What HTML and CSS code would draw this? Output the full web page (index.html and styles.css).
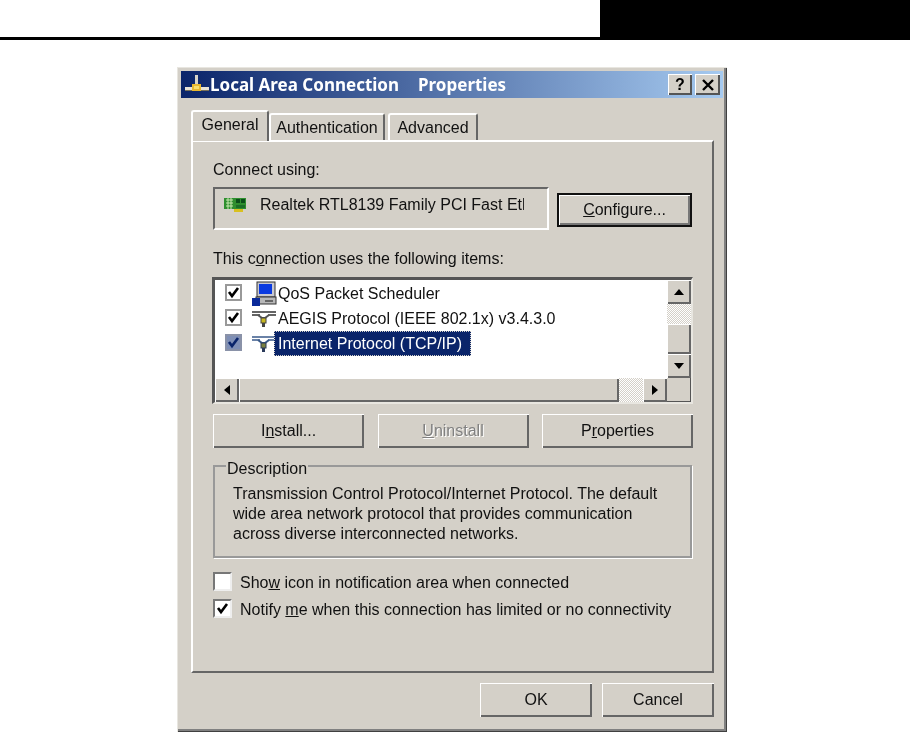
FILE: index.html
```html
<html>
    <head>
        <title>Local Area Connection Properties</title>
        <link rel="stylesheet" href="styles.css">
    </head>
    <body>
        <div class="top">
            <div class="topblock"></div>
        </div>
        <div class="dialog">
            <div class="titlebar">
                <svg class="titleicon" width="26" height="24" viewBox="0 0 26 24">
                    <rect x="11" y="3" width="3" height="11" fill="#d8d4c8"/>
                    <rect x="1" y="15" width="24" height="3" fill="#e8e4d8"/>
                    <rect x="1" y="18" width="24" height="1" fill="#77705a"/>
                    <rect x="8" y="12" width="9" height="7" fill="#e8b830"/>
                    <rect x="10" y="14" width="5" height="3" fill="#f8e070"/>
                </svg>
                <span class="titletext">Local Area Connection</span>
                <span class="titletext">Properties</span>
                <div class="titlebtns">
                    <div class="capbtn">?</div>
                    <div class="capbtn closebtn">
                        <svg width="14" height="12" viewBox="0 0 14 12"><path d="M2 1 L12 11 M12 1 L2 11" stroke="#000" stroke-width="2.4"/></svg>
                    </div>
                </div>
            </div>

            <div class="tabs">
                <div class="tab active">General</div>
                <div class="tab t2">Authentication</div>
                <div class="tab t3">Advanced</div>
            </div>

            <div class="panel">
                <p class="label">Connect using:</p>
                <div class="adapterrow">
                    <div class="adapter">
                        <svg width="25" height="19" viewBox="0 0 25 19">
                            <rect x="1" y="3" width="22" height="11" fill="#2f8f2f"/>
                            <path d="M3 5 H10 M3 8 H10 M3 11 H10 M5 3 V14 M8 3 V14" stroke="#c8e8b0" stroke-width="1"/>
                            <rect x="13" y="4" width="4" height="4" fill="#0b4f1a"/>
                            <rect x="18" y="4" width="4" height="4" fill="#0b4f1a"/>
                            <rect x="13" y="10" width="9" height="3" fill="#1c6e28"/>
                            <rect x="11" y="14" width="9" height="3" fill="#d8c020"/>
                        </svg>
                        <span class="adaptername">Realtek RTL8139 Family PCI Fast Eth</span>
                    </div>
                    <div class="btn configure"><span><u>C</u>onfigure...</span></div>
                </div>

                <p class="label items">This c<u>o</u>nnection uses the following items:</p>
                <div class="listbox">
                    <div class="listmain">
                        <div class="rows">
                            <div class="row">
                                <span class="check"><svg width="13" height="13" viewBox="0 0 13 13"><path d="M2 6 L5 10 L11 2" fill="none" stroke="#000" stroke-width="2.6"/></svg></span>
                                <svg class="rowicon" width="26" height="26" viewBox="0 0 26 26">
                                    <rect x="6" y="1" width="18" height="15" fill="#c8c8d0" stroke="#333"/>
                                    <rect x="8" y="3" width="13" height="10" fill="#0a3ae0"/>
                                    <rect x="5" y="16" width="20" height="7" fill="#b8b8b8" stroke="#333"/>
                                    <rect x="1" y="17" width="8" height="8" fill="#0a2a9a"/>
                                    <rect x="14" y="19" width="8" height="2" fill="#666"/>
                                </svg>
                                <span class="rowtext">QoS Packet Scheduler</span>
                            </div>
                            <div class="row">
                                <span class="check"><svg width="13" height="13" viewBox="0 0 13 13"><path d="M2 6 L5 10 L11 2" fill="none" stroke="#000" stroke-width="2.6"/></svg></span>
                                <svg class="rowicon" width="26" height="26" viewBox="0 0 26 26">
                                    <path d="M1 6 H25 M1 9 H9 M17 9 H25" stroke="#333" stroke-width="1.6"/>
                                    <path d="M7 9 L11 12 H14 L18 9" fill="none" stroke="#555" stroke-width="2"/>
                                    <rect x="10" y="12" width="5" height="5" fill="#c8b820" stroke="#444"/>
                                    <rect x="11" y="17" width="3" height="4" fill="#444"/>
                                </svg>
                                <span class="rowtext">AEGIS Protocol (IEEE 802.1x) v3.4.3.0</span>
                            </div>
                            <div class="row selected">
                                <span class="check"><svg width="13" height="13" viewBox="0 0 13 13"><path d="M2 6 L5 10 L11 2" fill="none" stroke="#0a246a" stroke-width="2.6"/></svg></span>
                                <svg class="rowicon" width="26" height="26" viewBox="0 0 26 26">
                                    <path d="M1 6 H25 M1 9 H9 M17 9 H25" stroke="#3a5a8a" stroke-width="1.6"/>
                                    <path d="M7 9 L11 12 H14 L18 9" fill="none" stroke="#3a5a8a" stroke-width="2"/>
                                    <rect x="10" y="12" width="5" height="5" fill="#7a8040" stroke="#2a3a5a"/>
                                    <rect x="11" y="17" width="3" height="4" fill="#2a3a5a"/>
                                </svg>
                                <span class="rowtext">Internet Protocol (TCP/IP)</span>
                            </div>
                        </div>
                        <div class="hscroll">
                            <div class="sbtn"><i class="arrow left"></i></div>
                            <div class="hthumb"></div>
                            <div class="track"></div>
                            <div class="sbtn"><i class="arrow right"></i></div>
                        </div>
                    </div>
                    <div class="vscroll">
                        <div class="sbtn"><i class="arrow up"></i></div>
                        <div class="track"></div>
                        <div class="vthumb"></div>
                        <div class="sbtn"><i class="arrow down"></i></div>
                    </div>
                </div>

                <div class="actions">
                    <div class="btn"><span>I<u>n</u>stall...</span></div>
                    <div class="btn disabled"><span><u>U</u>ninstall</span></div>
                    <div class="btn"><span>P<u>r</u>operties</span></div>
                </div>

                <div class="group">
                    <span class="legend">Description</span>
                    <p>Transmission Control Protocol/Internet Protocol. The default wide area network protocol that provides communication across diverse interconnected networks.</p>
                </div>

                <div class="option first">
                    <span class="check big"></span>
                    <span class="optiontext">Sho<u>w</u> icon in notification area when connected</span>
                </div>
                <div class="option">
                    <span class="check big"><svg width="13" height="13" viewBox="0 0 13 13"><path d="M2 6 L5 10 L11 2" fill="none" stroke="#000" stroke-width="2.6"/></svg></span>
                    <span class="optiontext">Notify <u>m</u>e when this connection has limited or no connectivity</span>
                </div>
            </div>

            <div class="footer">
                <div class="btn"><span>OK</span></div>
                <div class="btn"><span>Cancel</span></div>
            </div>
        </div>
    </body>
</html>
```

FILE: styles.css
```css
*{
    margin: 0;
    padding: 0;
    box-sizing: border-box;
}
body{
    background: #fff;
    font-family: "Liberation Sans", Arial, sans-serif;
    font-size: 16px;
    color: #111;
    overflow: hidden;
    height: 733px;
}
.top{
    height: 40px;
    border-bottom: 3px solid #000;
    display: flex;
    justify-content: flex-end;
}
.topblock{
    width: 310px;
    height: 37px;
    background: #000;
}
.dialog{
    width: 550px;
    height: 665px;
    margin-top: 27px;
    margin-left: 177px;
    padding: 4px;
    background: #d4d0c8;
    box-shadow: inset 1px 1px #e8e6e0, inset -1px -1px #404040, inset -3px -3px #808080;
    filter: blur(0.35px);
}
.titlebar{
    height: 27px;
    display: flex;
    align-items: center;
    gap: 19px;
    padding-left: 29px;
    position: relative;
    background: linear-gradient(to right, #0a246a, #a6caf0);
}
.titleicon{
    position: absolute;
    left: 3px;
    top: 1px;
}
.titletext{
    color: #fff;
    font-family: "Noto Sans", sans-serif;
    font-weight: bold;
    font-size: 17px;
}
.titlebtns{
    margin-left: auto;
    margin-right: 3px;
    display: flex;
    gap: 3px;
}
.capbtn{
    width: 24px;
    height: 21px;
    background: #d4d0c8;
    box-shadow: inset 1px 1px #fff, inset -2px -2px #555;
    display: flex;
    align-items: center;
    justify-content: center;
    font-weight: bold;
    font-size: 16px;
    color: #000;
}
.closebtn{
    width: 25px;
}
.tabs{
    display: flex;
    align-items: flex-end;
    height: 30px;
    margin-top: 12px;
    margin-left: 10px;
    position: relative;
}
.tab{
    height: 27px;
    padding-top: 4px;
    text-align: center;
    background: #d4d0c8;
    border-top: 2px solid #fff;
    border-left: 2px solid #fff;
    border-right: 2px solid #666;
    border-radius: 3px 3px 0 0;
    width: 116px;
}
.tab.active{
    width: 78px;
    height: 31px;
    margin-bottom: -1px;
    position: relative;
    z-index: 1;
}
.tab.t3{
    width: 90px;
    margin-left: 3px;
}
.panel{
    width: 523px;
    height: 533px;
    margin-left: 10px;
    padding: 18px 20px 0;
    border-top: 2px solid #fff;
    border-left: 2px solid #fff;
    border-right: 2px solid #666;
    border-bottom: 2px solid #666;
}
.label{
    height: 20px;
    line-height: 20px;
}
.adapterrow{
    display: flex;
    margin-top: 7px;
    gap: 8px;
}
.adapter{
    width: 336px;
    height: 43px;
    flex: none;
    display: flex;
    align-items: flex-start;
    padding: 6px 0 0 8px;
    gap: 12px;
    border-top: 2px solid #666;
    border-left: 2px solid #666;
    border-right: 2px solid #fff;
    border-bottom: 2px solid #fff;
}
.adaptername{
    width: 264px;
    line-height: 20px;
    white-space: nowrap;
    overflow: hidden;
}
.btn{
    height: 34px;
    width: 151px;
    flex: none;
    display: flex;
    align-items: center;
    justify-content: center;
    background: #d4d0c8;
    box-shadow: inset 1px 1px #fff, inset -2px -2px #666;
}
.configure{
    width: 135px;
    margin-top: 6px;
    border: 2px solid #111;
    box-shadow: inset 1px 1px #fff, inset -2px -2px #777;
}
.items{
    margin-top: 19px;
}
.listbox{
    display: flex;
    width: 481px;
    height: 127px;
    margin-top: 8px;
    margin-left: -1px;
    border-top: 3px solid #555;
    border-left: 3px solid #555;
    border-right: 2px solid #e8e6e0;
    border-bottom: 2px solid #e8e6e0;
    box-shadow: inset -1px -1px #555;
    background: #d4d0c8;
}
.listmain{
    flex: 1;
    display: flex;
    flex-direction: column;
}
.rows{
    height: 98px;
    background: #fff;
    padding: 1px 0 0 10px;
}
.row{
    display: flex;
    align-items: center;
    height: 25px;
}
.check{
    width: 17px;
    height: 17px;
    margin-bottom: 2px;
    background: #fff;
    border: 2px solid #999;
    display: flex;
    align-items: center;
    justify-content: center;
    flex: none;
}
.rowicon{
    margin-left: 9px;
    flex: none;
}
.rowtext{
    white-space: nowrap;
    padding: 0 1px;
}
.row.selected .check{
    background: #7f8fb5;
    border-color: #8a92a8;
}
.row.selected .rowtext{
    background: #0a246a;
    color: #fff;
    height: 25px;
    line-height: 25px;
    width: 197px;
    margin-left: -3px;
    padding: 0 4px;
    outline: 1px dotted #d4d0c8;
    outline-offset: -1px;
}
.hscroll{
    height: 24px;
    display: flex;
}
.vscroll{
    width: 24px;
    height: 98px;
    display: flex;
    flex-direction: column;
}
.sbtn{
    width: 24px;
    height: 24px;
    flex: none;
    display: flex;
    align-items: center;
    justify-content: center;
    background: #d4d0c8;
    box-shadow: inset 1px 1px #fff, inset -2px -2px #666;
}
.hthumb{
    width: 380px;
    background: #d4d0c8;
    box-shadow: inset 1px 1px #fff, inset -2px -2px #666;
}
.vthumb{
    height: 30px;
    background: #d4d0c8;
    box-shadow: inset 1px 1px #fff, inset -2px -2px #666;
}
.track{
    flex: 1;
    background: repeating-conic-gradient(#fff 0 25%, #d4d0c8 0 50%) 0 0 / 2px 2px;
}
.arrow{
    width: 0;
    height: 0;
    display: block;
    border: 5px solid transparent;
}
.arrow.left{
    border-right: 6px solid #000;
    border-left: 0;
}
.arrow.right{
    border-left: 6px solid #000;
    border-right: 0;
}
.arrow.up{
    border-bottom: 6px solid #000;
    border-top: 0;
}
.arrow.down{
    border-top: 6px solid #000;
    border-bottom: 0;
}
.actions{
    display: flex;
    justify-content: space-between;
    width: 480px;
    margin-top: 10px;
}
.disabled{
    color: #808080;
    text-shadow: 1px 1px #fff;
}
.group{
    position: relative;
    width: 479px;
    height: 93px;
    margin-top: 17px;
    padding: 17px 18px 0;
    border: 2px solid #999;
    box-shadow: 1px 1px #fff;
    line-height: 20px;
}
.legend{
    position: absolute;
    top: -7px;
    left: 11px;
    padding: 0 1px;
    background: #d4d0c8;
    line-height: 18px;
}
.option{
    display: flex;
    align-items: center;
    gap: 8px;
    height: 19px;
    margin-top: 8px;
}
.option.first{
    margin-top: 14px;
}
.optiontext{
    padding-top: 2px;
}
.check.big{
    width: 19px;
    height: 19px;
    margin-bottom: 0;
    border-top: 2px solid #777;
    border-left: 2px solid #777;
    border-right: 2px solid #eee;
    border-bottom: 2px solid #eee;
}
.footer{
    display: flex;
    justify-content: flex-end;
    gap: 10px;
    width: 533px;
    margin-top: 10px;
}
.footer .btn{
    width: 112px;
}
```
